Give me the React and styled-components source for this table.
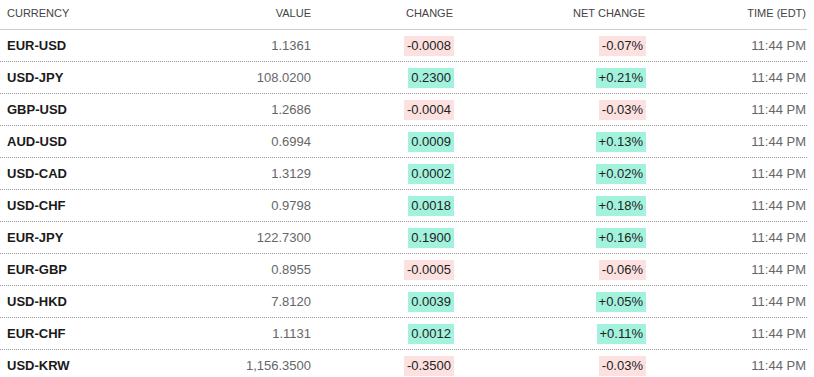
import React from "react";
import styled, { createGlobalStyle } from "styled-components";

const GlobalStyle = createGlobalStyle`
  body {
    margin: 0;
    background: #fff;
    font-family: "Liberation Sans", Arial, sans-serif;
  }
`;

const rates = [
  { name: "EUR-USD", value: "1.1361", change: "-0.0008", net: "-0.07%" },
  { name: "USD-JPY", value: "108.0200", change: "0.2300", net: "+0.21%" },
  { name: "GBP-USD", value: "1.2686", change: "-0.0004", net: "-0.03%" },
  { name: "AUD-USD", value: "0.6994", change: "0.0009", net: "+0.13%" },
  { name: "USD-CAD", value: "1.3129", change: "0.0002", net: "+0.02%" },
  { name: "USD-CHF", value: "0.9798", change: "0.0018", net: "+0.18%" },
  { name: "EUR-JPY", value: "122.7300", change: "0.1900", net: "+0.16%" },
  { name: "EUR-GBP", value: "0.8955", change: "-0.0005", net: "-0.06%" },
  { name: "USD-HKD", value: "7.8120", change: "0.0039", net: "+0.05%" },
  { name: "EUR-CHF", value: "1.1131", change: "0.0012", net: "+0.11%" },
  { name: "USD-KRW", value: "1,156.3500", change: "-0.3500", net: "-0.03%" }
];

const Table = styled.div`
  width: 807px;
`;

const Row = styled.div`
  display: grid;
  grid-template-columns: 200px 112px 142px 192px 161px;
  align-items: center;
  height: ${props => (props.head ? "29px" : "31px")};
  border-bottom: 1px ${props => (props.head ? "solid #cfcfcf" : "dotted #9a9a9a")};
`;

const HeadCell = styled.div`
  font-size: 11px;
  color: #444;
  text-transform: uppercase;
  text-align: ${props => (props.left ? "left" : "right")};
  padding: ${props => (props.left ? "0 0 0 7px" : "0 1px 0 0")};
  margin-top: -3px;
`;

const Name = styled.div`
  font-size: 13px;
  font-weight: bold;
  color: #1a1a1a;
  padding-left: 7px;
`;

const Cell = styled.div`
  font-size: 13px;
  color: #666;
  text-align: right;
  padding-right: 1px;
`;

const Badge = styled.span`
  display: inline-block;
  font-size: 13px;
  line-height: 20px;
  padding: 0 3px;
  color: #222;
  background: ${props => (props.up ? "#a3f2dd" : "#fde1e1")};
`;

const BadgeCell = styled.div`
  text-align: right;
`;

export default function App() {
  return (
    <>
      <GlobalStyle />
      <Table>
        <Row head>
          <HeadCell left>Currency</HeadCell>
          <HeadCell>Value</HeadCell>
          <HeadCell>Change</HeadCell>
          <HeadCell>Net Change</HeadCell>
          <HeadCell>Time (EDT)</HeadCell>
        </Row>
        {rates.map(r => {
          const up = !r.change.startsWith("-");
          return (
            <Row key={r.name}>
              <Name>{r.name}</Name>
              <Cell>{r.value}</Cell>
              <BadgeCell>
                <Badge up={up}>{r.change}</Badge>
              </BadgeCell>
              <BadgeCell>
                <Badge up={up}>{r.net}</Badge>
              </BadgeCell>
              <Cell>11:44 PM</Cell>
            </Row>
          );
        })}
      </Table>
    </>
  );
}
